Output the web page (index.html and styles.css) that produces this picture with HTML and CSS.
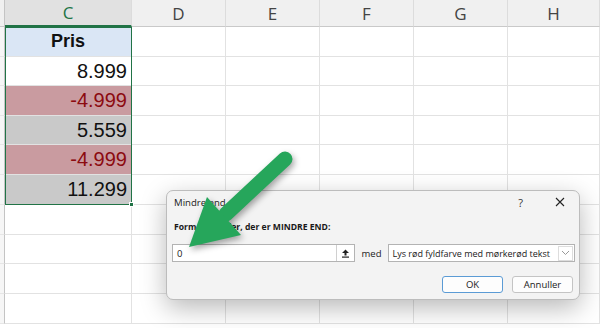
FILE: index.html
```html
<html>
<head>
<title>Mindre end</title>
<link rel="stylesheet" href="styles.css">
</head>
<body>

<div id="sheet">
	<div class="hdr corner"></div>
	<div class="hdr active">C</div>
	<div class="hdr">D</div>
	<div class="hdr">E</div>
	<div class="hdr">F</div>
	<div class="hdr">G</div>
	<div class="hdr">H</div>

	<div class="rowhdr"></div>
	<div class="cell title">Pris</div>
	<div class="cell"></div><div class="cell"></div><div class="cell"></div><div class="cell"></div><div class="cell"></div>

	<div class="rowhdr"></div>
	<div class="cell num">8.999</div>
	<div class="cell"></div><div class="cell"></div><div class="cell"></div><div class="cell"></div><div class="cell"></div>

	<div class="rowhdr"></div>
	<div class="cell num neg">-4.999</div>
	<div class="cell"></div><div class="cell"></div><div class="cell"></div><div class="cell"></div><div class="cell"></div>

	<div class="rowhdr"></div>
	<div class="cell num shade">5.559</div>
	<div class="cell"></div><div class="cell"></div><div class="cell"></div><div class="cell"></div><div class="cell"></div>

	<div class="rowhdr"></div>
	<div class="cell num neg">-4.999</div>
	<div class="cell"></div><div class="cell"></div><div class="cell"></div><div class="cell"></div><div class="cell"></div>

	<div class="rowhdr"></div>
	<div class="cell num shade">11.299</div>
	<div class="cell"></div><div class="cell"></div><div class="cell"></div><div class="cell"></div><div class="cell"></div>

	<div class="rowhdr"></div>
	<div class="cell"></div><div class="cell"></div><div class="cell"></div><div class="cell"></div><div class="cell"></div><div class="cell"></div>
	<div class="rowhdr"></div>
	<div class="cell"></div><div class="cell"></div><div class="cell"></div><div class="cell"></div><div class="cell"></div><div class="cell"></div>
	<div class="rowhdr"></div>
	<div class="cell"></div><div class="cell"></div><div class="cell"></div><div class="cell"></div><div class="cell"></div><div class="cell"></div>
	<div class="rowhdr"></div>
	<div class="cell"></div><div class="cell"></div><div class="cell"></div><div class="cell"></div><div class="cell"></div><div class="cell"></div>

	<div id="selection"><div class="handle"></div></div>
</div>

<div id="dialog">
	<div class="dlg-title">
		<span>Mindre end</span>
		<span class="help">?</span>
		<svg class="close" width="10" height="10" viewBox="0 0 10 10"><path d="M1 1L9 9M9 1L1 9" stroke="#222" stroke-width="1.1"/></svg>
	</div>
	<div class="dlg-label">Formater celler, der er MINDRE END:</div>
	<div class="dlg-row">
		<div class="inp">
			<span>0</span>
			<div class="inp-btn">
				<svg width="9" height="9" viewBox="0 0 9 9"><path d="M4.5 0.5L8 4H5.5V6.5H3.5V4H1Z" fill="#222"/><rect x="1" y="7.5" width="7" height="1.2" fill="#222"/></svg>
			</div>
		</div>
		<span class="med">med</span>
		<div class="sel">
			<span>Lys rød fyldfarve med mørkerød tekst</span>
			<div class="sel-btn">
				<svg width="9" height="6" viewBox="0 0 9 6"><path d="M1 1L4.5 4.5L8 1" fill="none" stroke="#999" stroke-width="1"/></svg>
			</div>
		</div>
	</div>
	<div class="dlg-buttons">
		<button class="btn default">OK</button>
		<button class="btn">Annuller</button>
	</div>
</div>

<svg id="arrow" width="600" height="328" viewBox="0 0 600 328">
	<g class="arrow-shape">
		<line x1="285" y1="159" x2="226" y2="214" stroke="#26a65b" stroke-width="15" stroke-linecap="round"/>
		<polygon points="189,247 207,197 241,235" fill="#26a65b"/>
	</g>
</svg>

</body>
</html>
```

FILE: styles.css
```css
html, body {
	margin: 0px;
	padding: 0px;
	width: 600px;
	height: 328px;
	overflow: hidden;
	background-color: #ffffff;
	font-family: "Open Sans", sans-serif;
}
#sheet {
	position: relative;
	display: grid;
	grid-template-columns: 5px 127px 94px 94px 94px 94px 92px;
	grid-template-rows: 27px 30px 29px 30px 29px 30px 30px 30px 29px 30px 30px;
}
.hdr {
	background-color: #f0f0f0;
	border-bottom: 1px solid #c9c9c9;
	border-right: 1px solid #dcdcdc;
	box-sizing: border-box;
	color: #444444;
	font-size: 17px;
	display: flex;
	align-items: center;
	justify-content: center;
}
.hdr.corner {
	border-right: 1px solid #c4c4c4;
}
.hdr.active {
	background-color: #e1e1e1;
	color: #217346;
	border-bottom: 2px solid #217346;
}
.rowhdr {
	background-color: #f6f6f6;
	border-right: 1px solid #c4c4c4;
	border-bottom: 1px solid #e6e6e6;
	box-sizing: border-box;
}
.cell {
	border-right: 1px solid #e2e2e2;
	border-bottom: 1px solid #e2e2e2;
	box-sizing: border-box;
	font-family: "Liberation Sans", Arial, sans-serif;
	font-size: 20px;
	color: #111111;
	display: flex;
	align-items: center;
}
.title {
	background-color: #dae6f5;
	justify-content: center;
	font-weight: bold;
	font-size: 18px;
}
.num {
	justify-content: flex-end;
	padding-right: 4px;
}
.neg {
	background-color: #c99ba0;
	color: #8c0a10;
}
.shade {
	background-color: #c9c9c9;
}
#selection {
	position: absolute;
	left: 5px;
	top: 27px;
	width: 127px;
	height: 178px;
	border: 1px solid #217346;
	box-sizing: border-box;
}
.handle {
	position: absolute;
	right: -3px;
	bottom: -3px;
	width: 5px;
	height: 5px;
	background-color: #217346;
	border: 1px solid #ffffff;
	box-sizing: border-box;
}

/* dialog */
#dialog {
	position: absolute;
	left: 166px;
	top: 190px;
	width: 414px;
	height: 110px;
	box-sizing: border-box;
	background-color: #f3f3f3;
	border: 1px solid #bcbcbc;
	border-radius: 7px;
	box-shadow: 0 8px 26px rgba(0,0,0,0.28);
	padding: 0 4px 0 5px;
	display: flex;
	flex-direction: column;
	font-size: 9px;
	color: #1a1a1a;
}
.dlg-title {
	height: 22px;
	display: flex;
	align-items: center;
	padding-left: 2px;
	font-size: 9.6px;
}
.help {
	margin-left: auto;
	margin-right: 32px;
	font-size: 11px;
	color: #333333;
}
.close {
	margin-right: 10px;
}
.dlg-label {
	margin-top: 7px;
	font-weight: bold;
	font-size: 8.6px;
	padding-left: 2px;
	line-height: 14px;
}
.dlg-row {
	margin-top: 10px;
	display: flex;
	align-items: center;
	height: 18px;
}
.inp {
	width: 183px;
	height: 18px;
	box-sizing: border-box;
	border: 1px solid #b3b3b3;
	background-color: #ffffff;
	display: flex;
	align-items: center;
	padding-left: 4px;
	font-size: 9.5px;
}
.inp-btn {
	margin-left: auto;
	width: 17px;
	height: 16px;
	border-left: 1px solid #d0d0d0;
	display: flex;
	align-items: center;
	justify-content: center;
}
.med {
	margin-left: 7px;
	width: 27px;
	font-size: 9.5px;
}
.sel {
	width: 187px;
	height: 18px;
	box-sizing: border-box;
	border: 1px solid #b3b3b3;
	background-color: #ffffff;
	display: flex;
	align-items: center;
	padding-left: 3px;
	white-space: nowrap;
}
.sel-btn {
	margin-left: auto;
	width: 15px;
	height: 15px;
	margin-right: 1px;
	border: 1px solid #dddddd;
	box-sizing: border-box;
	display: flex;
	align-items: center;
	justify-content: center;
}
.dlg-buttons {
	margin-top: 14px;
	display: flex;
	justify-content: flex-end;
	gap: 9px;
	padding-right: 2px;
}
.btn {
	width: 61px;
	height: 17px;
	box-sizing: border-box;
	background-color: #fdfdfd;
	border: 1px solid #c4c4c4;
	border-radius: 3px;
	font-family: "Open Sans", sans-serif;
	font-size: 9.5px;
	color: #1a1a1a;
	padding: 0;
}
.btn.default {
	border: 1px solid #5b9bd5;
}
#arrow {
	position: absolute;
	left: 0;
	top: 0;
	pointer-events: none;
}
.arrow-shape {
	filter: drop-shadow(2px 3px 3px rgba(0,0,0,0.35));
}
```
